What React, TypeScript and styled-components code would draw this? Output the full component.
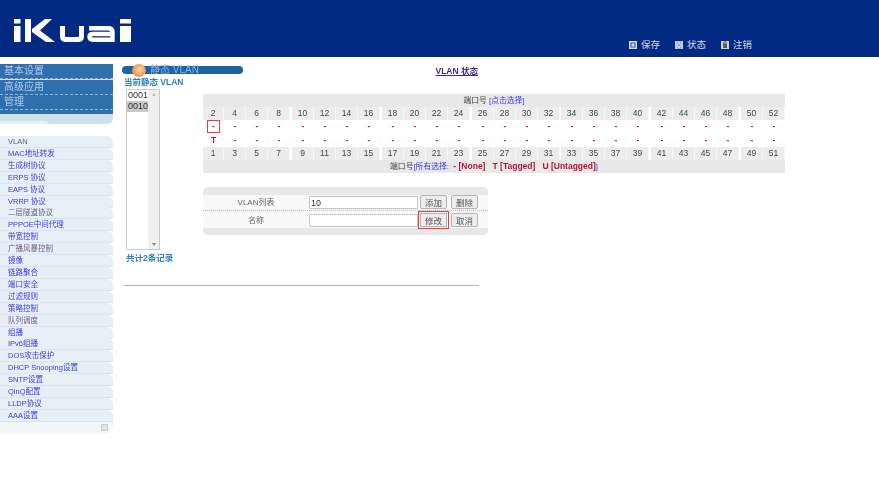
import React from "react";
import styled, { createGlobalStyle } from "styled-components";

const Global = createGlobalStyle`
  html, body { margin: 0; padding: 0; background: #fff; }
  body { font-family: "Liberation Sans", "Noto Sans CJK SC", sans-serif; font-size: 8.5px; color: #444; }
`;

const Page = styled.div`
  width: 879px;
  height: 503px;
  overflow: hidden;
  filter: blur(0.4px);
`;

const Header = styled.header`
  height: 57px;
  background: #032a82;
  display: flex;
  justify-content: space-between;
  align-items: flex-start;
  padding: 19px 127px 0 14px;
  box-sizing: border-box;
`;

const TopLinks = styled.nav`
  display: flex;
  gap: 15px;
  margin-top: 20px;
`;

const TopLink = styled.span`
  display: flex;
  align-items: center;
  gap: 4px;
  color: #d5dcec;
  font-size: 9.5px;
  line-height: 12px;
`;

const Body = styled.div`
  display: flex;
`;

const Sidebar = styled.aside`
  width: 113px;
  flex: none;
  padding-top: 7px;
`;

const TopMenu = styled.div`
  background: #cfe0ec;
  border-radius: 0 0 6px 0;
  height: 60px;
  margin-bottom: 12px;
  overflow: hidden;
`;

const TopMenuItem = styled.div`
  height: 14px;
  line-height: 14px;
  padding-left: 4px;
  margin-bottom: 0.5px;
  background: #2f6fae;
  border-bottom: 0.5px dashed #8fb6d8;
  color: #b0cde8;
  font-size: 10px;
`;

const TopMenuTail = styled.div`
  height: 4px;
  background: #2f6fae;
  margin-top: -1px;
`;

const Notch = styled.div`
  width: 50px;
  height: 7px;
  margin-top: 7px;
  background: #e6eff6;
  border-radius: 0 6px 0 0;
`;

const SideList = styled.ul`
  list-style: none;
  margin: 0;
  padding: 0;
`;

const SideItem = styled.li<{ $muted?: boolean }>`
  height: 11px;
  line-height: 11px;
  margin-bottom: 0.92px;
  padding-left: 8px;
  background: #e8f0f7;
  border-radius: 0 6px 0 0;
  box-shadow: 0 1px 0 #d6e6f2;
  color: ${(p) => (p.$muted ? "#6a5a88" : "#3a3ae0")};
  font-size: 7.5px;
  white-space: nowrap;
`;

const SideFoot = styled.div`
  height: 11px;
  background: #f3f6f9;
  border-radius: 0 0 6px 0;
  display: flex;
  justify-content: flex-end;
  align-items: center;
  padding-right: 5px;
`;

const FootMark = styled.span`
  width: 5px;
  height: 5px;
  background: #dfe3e6;
  border: 0.5px solid #ccc;
`;

const Main = styled.main`
  flex: 1;
  padding: 9px 0 0 9px;
`;

const TitleRow = styled.div`
  display: flex;
  align-items: center;
  width: 356px;
  height: 8px;
`;

const TitleBar = styled.div`
  width: 121px;
  height: 8px;
  border-radius: 4px;
  background: #1d62a3;
  position: relative;
  color: #8ab4dc;
  font-size: 10px;
  line-height: 8px;
  padding-left: 28px;
  box-sizing: border-box;
  white-space: nowrap;
`;

const Orb = styled.span`
  position: absolute;
  left: 10px;
  top: -2px;
  width: 14px;
  height: 13px;
  border-radius: 50%;
  background: radial-gradient(circle at 55% 45%, #fbd9ac 0%, #f0a05a 55%, #d98238 100%);
`;

const StatusLink = styled.a`
  margin-left: auto;
  color: #3c2a8e;
  font-size: 8.5px;
  font-weight: bold;
  text-decoration: underline;
`;

const Columns = styled.div`
  display: flex;
`;

const ListColumn = styled.div`
  width: 80px;
  flex: none;
  padding-top: 3px;
  margin-left: 2px;
`;

const ListLabel = styled.div`
  color: #2a7fc0;
  font-size: 8.5px;
  font-weight: bold;
  line-height: 11px;
  white-space: nowrap;
`;

const ListBox = styled.div`
  width: 34px;
  height: 161px;
  margin: 1px 0 0 2px;
  box-sizing: border-box;
  border: 1px solid #c9c9c9;
  display: flex;
  background: #fff;
`;

const ListOptions = styled.div`
  flex: 1;
  font-size: 9px;
  line-height: 11px;
  color: #333;
`;

const ListOption = styled.div<{ $selected?: boolean }>`
  padding-left: 1px;
  background: ${(p) => (p.$selected ? "#c8c8c8" : "transparent")};
`;

const ScrollTrack = styled.div`
  width: 11px;
  background: #f0f0f0;
  display: flex;
  flex-direction: column;
  justify-content: space-between;
  align-items: center;
  padding: 3px 0;
`;

const Arrow = styled.span<{ $down?: boolean }>`
  width: 0;
  height: 0;
  border-left: 2.5px solid transparent;
  border-right: 2.5px solid transparent;
  ${(p) =>
    p.$down ? "border-top: 3px solid #888;" : "border-bottom: 3px solid #bbb;"}
`;

const RecordCount = styled.div`
  color: #2a7fc0;
  font-size: 8.5px;
  font-weight: bold;
  line-height: 11px;
  margin: 3px 0 0 2px;
`;

const Rule = styled.div`
  width: 356px;
  height: 1px;
  background: #b5b5b5;
  margin: 21px 0 0 -1px;
`;

const Work = styled.div`
  padding-top: 20px;
  margin-left: -1px;
`;

const PortTable = styled.div`
  width: 582px;
`;

const Band = styled.div`
  height: 13px;
  line-height: 13px;
  background: #e8e8e8;
  text-align: center;
  font-size: 7.8px;
  color: #444;
  white-space: nowrap;
`;

const Note = styled.span`
  color: #3a3ae0;
`;

const Legend = styled.span`
  color: #b5143a;
  font-weight: bold;
  font-size: 8.5px;
  margin-left: 2px;
`;

const PortRow = styled.div<{ $gap?: boolean }>`
  display: flex;
  height: 13px;
  margin-top: ${(p) => (p.$gap ? "1px" : "0")};
`;

const PortCell = styled.div<{ $head?: boolean; $left: number; $w: number }>`
  width: ${(p) => p.$w}px;
  margin-left: ${(p) => p.$left}px;
  box-sizing: border-box;
  text-align: center;
  line-height: 13px;
  font-size: 8.5px;
  color: ${(p) => (p.$head ? "#444" : "#c4123c")};
  font-weight: ${(p) => (p.$head ? "normal" : "bold")};
  background: ${(p) => (p.$head ? "#ececec" : "transparent")};
  border-right: ${(p) => (p.$head ? "1px solid #f8f8f8" : "0")};
  position: relative;
`;

const Highlight = styled.span`
  position: absolute;
  left: 4px;
  top: 0;
  width: 13px;
  height: 13px;
  box-sizing: border-box;
  border: 1.5px solid #ee3b3b;
`;

const FormCard = styled.div`
  width: 285px;
  margin: 14px 0 0 0;
  background: #e8e8e8;
  border-radius: 5px;
  padding: 8px 0 7px;
`;

const FormRow = styled.div<{ $first?: boolean }>`
  display: flex;
  align-items: ${(p) => (p.$first ? "flex-start" : "flex-end")};
  height: ${(p) => (p.$first ? "16px" : "17px")};
  box-sizing: border-box;
  padding: ${(p) => (p.$first ? "0" : "0 0 1px")};
  background: #f8f8f8;
  border-bottom: ${(p) => (p.$first ? "1px dotted #bbb" : "0")};
`;

const FormLabel = styled.div`
  width: 106px;
  height: 13px;
  margin-top: 1px;
  line-height: 13px;
  text-align: center;
  color: #666;
  font-size: 8px;
`;

const FormInput = styled.input`
  width: 109px;
  height: 13px;
  margin: 1px 0 0;
  box-sizing: border-box;
  border: 1px solid #c6c6c6;
  background: #fff;
  padding: 0 1px;
  font: 9px "Liberation Sans", sans-serif;
  color: #333;
  outline: none;
  border-radius: 1px;
`;

const FormBtn = styled.button<{ $marked?: boolean; $second?: boolean }>`
  width: 27px;
  height: 14px;
  margin-left: ${(p) => (p.$second ? "4px" : "2px")};
  padding: 0;
  border: 1px solid #b5b5b5;
  border-radius: ${(p) => (p.$marked ? "0" : "2px")};
  background: #ededed;
  color: #555;
  font: 8.5px "Liberation Sans", "Noto Sans CJK SC", sans-serif;
  ${(p) => (p.$marked ? "outline: 1.5px solid #ee3b3b; outline-offset: 1.5px;" : "")}
`;

const evens = Array.from({ length: 26 }, (_, i) => (i + 1) * 2);

const margins = (i: number) => {
  if (i === 0 || i % 4 !== 0) return 0;
  return i === 16 ? 1 : 2;
};

const widthAt = (i: number) => (i === 0 ? 21 : 22);

const menu: [string, boolean?][] = [
  ["VLAN", true],
  ["MAC地址转发"],
  ["生成树协议"],
  ["ERPS 协议"],
  ["EAPS 协议"],
  ["VRRP 协议"],
  ["二层隧道协议", true],
  ["PPPOE中间代理"],
  ["带宽控制"],
  ["广播风暴控制", true],
  ["镜像"],
  ["链路聚合"],
  ["端口安全"],
  ["过滤规则"],
  ["策略控制"],
  ["队列调度", true],
  ["组播"],
  ["IPv6组播"],
  ["DOS攻击保护"],
  ["DHCP Snooping设置"],
  ["SNTP设置"],
  ["QinQ配置"],
  ["LLDP协议"],
  ["AAA设置"],
];

const Logo = () => (
  <svg width="118" height="24" viewBox="0 0 118 24" fill="none" stroke="#fff">
    <rect x="0" y="0" width="6.5" height="4.5" fill="#fff" stroke="none" />
    <rect x="0" y="7" width="6.5" height="16" fill="#fff" stroke="none" />
    <rect x="11" y="0" width="6" height="23" fill="#fff" stroke="none" />
    <path d="M38 0H31L18 10V13L32 23H41L26 11.5Z" fill="#fff" stroke="none" />
    <path d="M48.5 7V17Q48.5 20.5 52 20.5H64Q67.5 20.5 67.5 17V7" strokeWidth="5" />
    <path d="M75 9.3H94Q98.5 9.3 98.5 13V20.7H79Q75.5 20.7 75.5 17.8Q75.5 15 79 15H97" strokeWidth="4.4" />
    <rect x="106" y="0" width="11" height="4.5" fill="#fff" stroke="none" />
    <rect x="106" y="7" width="11" height="16" fill="#fff" stroke="none" />
  </svg>
);

const SaveIcon = () => (
  <svg width="8" height="8" viewBox="0 0 8 8">
    <rect width="8" height="8" fill="#cfd8e6" />
    <rect x="2" y="2" width="4" height="4" fill="none" stroke="#345a9a" />
  </svg>
);
const StateIcon = () => (
  <svg width="8" height="8" viewBox="0 0 8 8">
    <rect width="8" height="8" fill="#bcd0e6" />
    <path d="M2 1H6L4 4L6 7H2L4 4Z" fill="#fff" stroke="#4f78ad" strokeWidth="0.6" />
  </svg>
);
const LogoutIcon = () => (
  <svg width="8" height="8" viewBox="0 0 8 8">
    <rect width="8" height="8" fill="#cfd4dc" />
    <rect x="2" y="2.5" width="4" height="4.5" fill="#5b5b5b" />
    <path d="M2.8 3V1.8A1.2 1.2 0 0 1 5.2 1.8V3" fill="none" stroke="#5b5b5b" />
  </svg>
);

const Row = ({ values, head, gap, boxed }: { values: (string | number)[]; head?: boolean; gap?: boolean; boxed?: boolean }) => (
  <PortRow $gap={gap}>
    {values.map((v, i) => (
      <PortCell key={i} $head={head} $left={margins(i)} $w={widthAt(i)}>
        {boxed && i === 0 && <Highlight />}
        {v}
      </PortCell>
    ))}
  </PortRow>
);

export default function App() {
  const dash = evens.map(() => "-");
  const tRow = evens.map((_, i) => (i === 0 ? "T" : "-"));
  return (
    <Page>
      <Global />
      <Header>
        <Logo />
        <TopLinks>
          <TopLink><SaveIcon />保存</TopLink>
          <TopLink><StateIcon />状态</TopLink>
          <TopLink><LogoutIcon />注销</TopLink>
        </TopLinks>
      </Header>
      <Body>
        <Sidebar>
          <TopMenu>
            <TopMenuItem>基本设置</TopMenuItem>
            <TopMenuItem>高级应用</TopMenuItem>
            <TopMenuItem>管理</TopMenuItem>
            <TopMenuTail />
            <Notch />
          </TopMenu>
          <SideList>
            {menu.map(([label, muted]) => (
              <SideItem key={label} $muted={muted}>{label}</SideItem>
            ))}
          </SideList>
          <SideFoot><FootMark /></SideFoot>
        </Sidebar>
        <Main>
          <TitleRow>
            <TitleBar><Orb />静态 VLAN</TitleBar>
            <StatusLink>VLAN 状态</StatusLink>
          </TitleRow>
          <Columns>
            <ListColumn>
              <ListLabel>当前静态 VLAN</ListLabel>
              <ListBox>
                <ListOptions>
                  <ListOption>0001</ListOption>
                  <ListOption $selected>0010</ListOption>
                </ListOptions>
                <ScrollTrack><Arrow /><Arrow $down /></ScrollTrack>
              </ListBox>
              <RecordCount>共计2条记录</RecordCount>
              <Rule />
            </ListColumn>
            <Work>
              <PortTable>
                <Band>端口号 <Note>[点击选择]</Note></Band>
                <Row values={evens} head />
                <Row values={dash} boxed />
                <Row values={tRow} gap />
                <Row values={evens.map((n) => n - 1)} head />
                <Band>
                  端口号<Note>[所有选择:</Note>
                  <Legend> - [None] &nbsp; T [Tagged] &nbsp; U [Untagged]</Legend>
                  <Note>]</Note>
                </Band>
              </PortTable>
              <FormCard>
                <FormRow $first>
                  <FormLabel>VLAN列表</FormLabel>
                  <FormInput defaultValue="10" />
                  <FormBtn>添加</FormBtn>
                  <FormBtn $second>删除</FormBtn>
                </FormRow>
                <FormRow>
                  <FormLabel>名称</FormLabel>
                  <FormInput />
                  <FormBtn $marked>修改</FormBtn>
                  <FormBtn $second>取消</FormBtn>
                </FormRow>
              </FormCard>
            </Work>
          </Columns>
        </Main>
      </Body>
    </Page>
  );
}
